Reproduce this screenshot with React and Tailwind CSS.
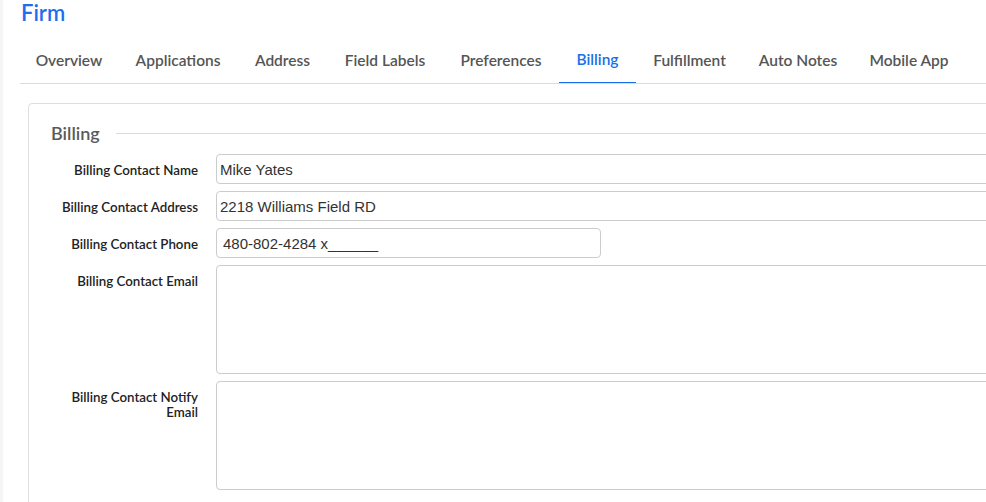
import React from 'react'

const TABS = [
  { label: 'Overview', w: 'w-[98px]' },
  { label: 'Applications', w: 'w-[120px]' },
  { label: 'Address', w: 'w-[89px]' },
  { label: 'Field Labels', w: 'w-[116px]' },
  { label: 'Preferences', w: 'w-[116px]' },
  { label: 'Billing', w: 'w-[77px]' },
  { label: 'Fulfillment', w: 'w-[107px]' },
  { label: 'Auto Notes', w: 'w-[110px]' },
  { label: 'Mobile App', w: 'w-[112px]' },
  { label: 'Features', w: 'w-[100px]' },
]

const FIELDS = [
  { key: 'name', label: 'Billing Contact Name', value: 'Mike Yates' },
  { key: 'address', label: 'Billing Contact Address', value: '2218 Williams Field RD' },
  { key: 'phone', label: 'Billing Contact Phone', value: '480-802-4284 x______', narrow: true },
  { key: 'email', label: 'Billing Contact Email', area: true },
  { key: 'notify', label: 'Billing Contact Notify Email', area: true },
]

export default function App() {
  return (
    <div className="flex h-[502px] w-[986px] overflow-hidden bg-white font-['Lato','Open_Sans',sans-serif]">
      <div className="w-[3px] shrink-0 bg-[#f4f5f7]" />
      <div className="min-w-0 flex-1 pl-[17px]">
        {/* page title */}
        <div className="h-[38px] pt-px">
          <h1 className="pl-px text-[22px] font-semibold leading-[24px] text-[#1f6fec]">Firm</h1>
        </div>

        {/* tabs */}
        <div className="flex w-[1100px] border-b border-[#dcdcdc]">
          {TABS.map(({ label, w }) => (
            <div
              key={label}
              className={`flex h-[45px] shrink-0 items-center justify-center text-[15.5px] font-semibold ${w} ${
                label === 'Billing' ? '-mb-px border-b border-[#1a6fe8] text-[#1a6fe8]' : 'text-[#555]'
              }`}
            >
              {label}
            </div>
          ))}
        </div>

        {/* card */}
        <div className="ml-[8px] mt-[19px] w-[1000px] rounded-[4px] border border-[#dedede] pb-[20px] pl-[22px] pr-[25px] pt-[17px]">
          <div className="flex items-center gap-[16px]">
            <span className="text-[18px] font-semibold leading-[24px] text-[#5a5a5a]">Billing</span>
            <div className="h-px flex-1 bg-[#cfdaf5]" />
          </div>

          <div className="mt-[9px] flex flex-col gap-[7px]">
            {FIELDS.map((f) => (
              <div key={f.key} className="flex gap-[18px]">
                <label className="w-[147px] shrink-0 pt-[9px] text-right text-[13.3px] font-semibold leading-[15px] text-[#222]">
                  {f.label}
                </label>
                {f.area ? (
                  <textarea
                    readOnly
                    className="h-[109px] flex-1 resize-none rounded-[4px] border border-[#cccccc] bg-white"
                  />
                ) : (
                  <input
                    readOnly
                    defaultValue={f.value}
                    className={`h-[30px] rounded-[4px] border border-[#cccccc] bg-white font-['Liberation_Sans',Arial,sans-serif] text-[15px] text-[#333] outline-none ${
                      f.narrow ? 'w-[385px] pl-[6px]' : 'flex-1 pl-[3px]'
                    }`}
                  />
                )}
              </div>
            ))}
          </div>
        </div>
      </div>
    </div>
  )
}
